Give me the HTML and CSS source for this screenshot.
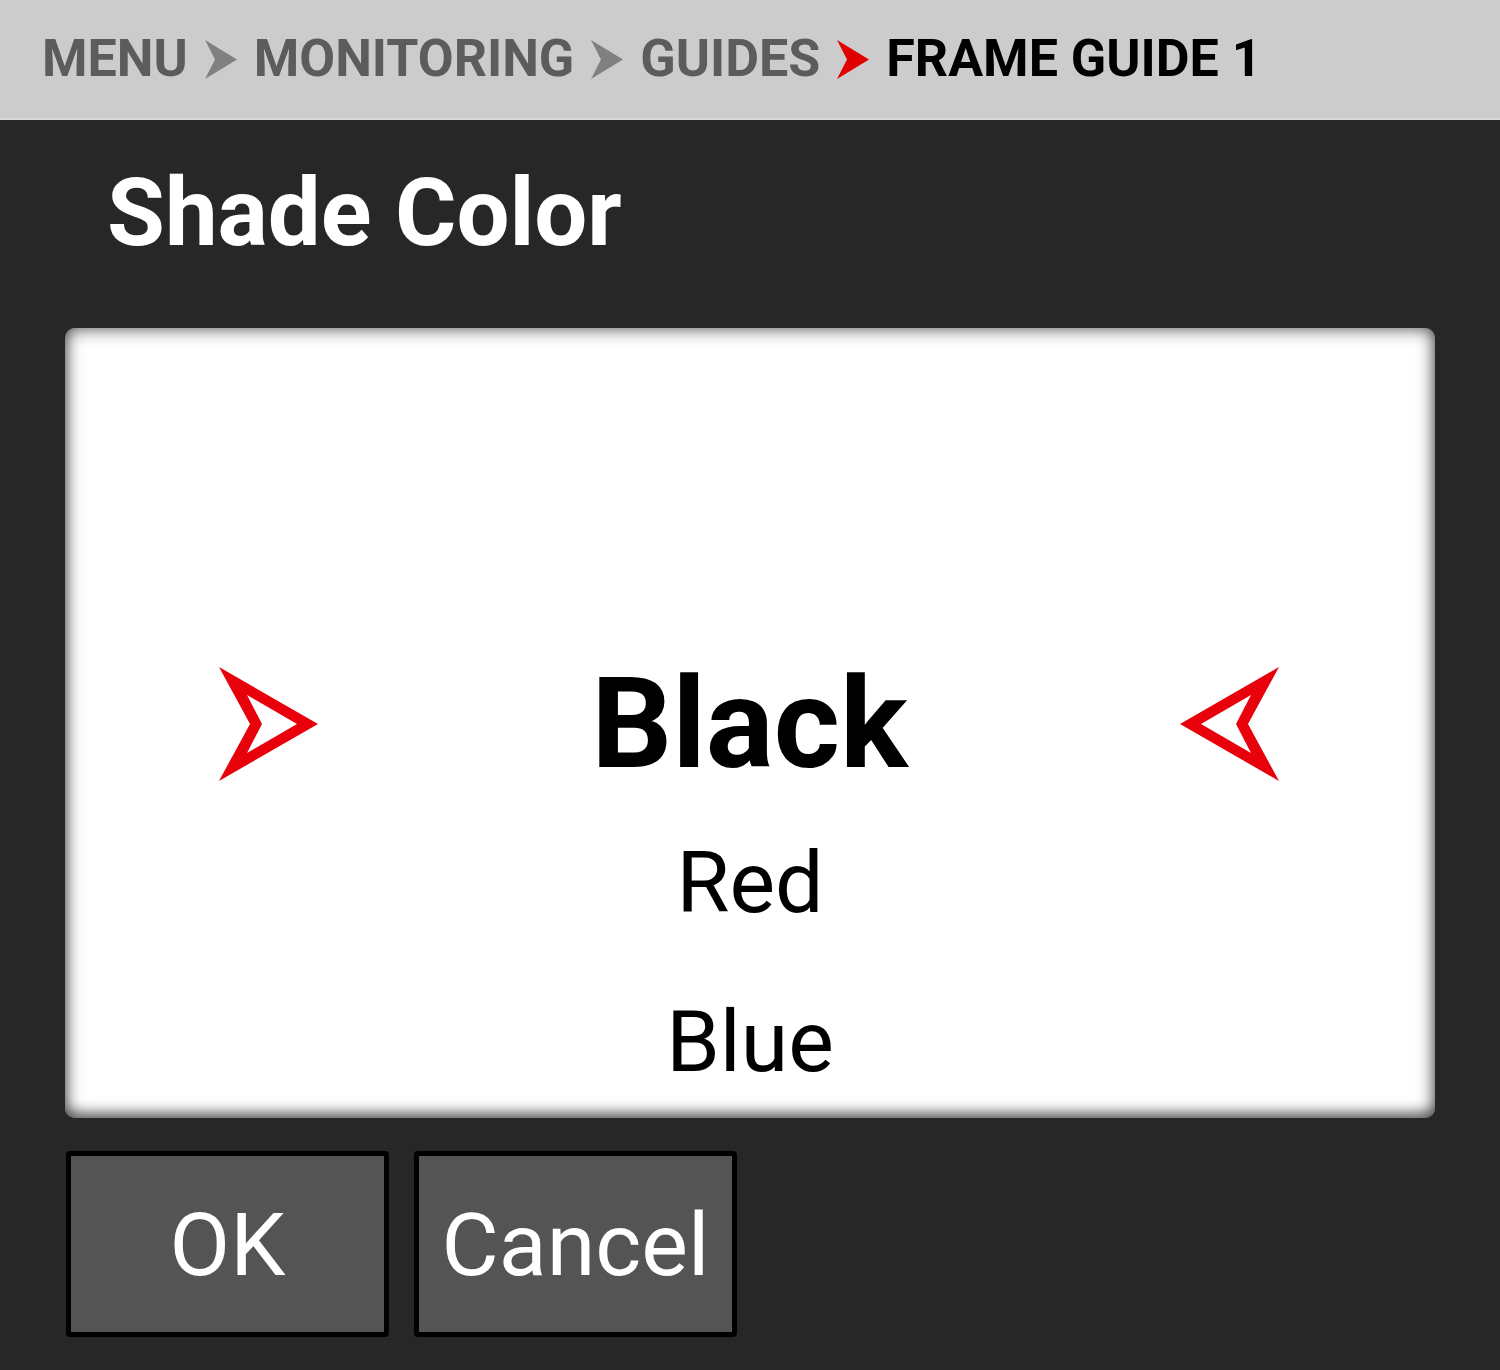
FILE: index.html
```html
<!DOCTYPE html>
<html>
<head>
<title>Shade Color</title>
<meta charset="utf-8">
<link rel="stylesheet" href="styles.css">
</head>
<body>
	<div id="breadcrumb">
		<span class="crumb">MENU</span>
		<svg class="sep" width="32" height="39" viewBox="0 0 32 39"><path d="M0 0 L32 19.5 L0 39 L10 19.5 Z"/></svg>
		<span class="crumb">MONITORING</span>
		<svg class="sep" width="32" height="39" viewBox="0 0 32 39"><path d="M0 0 L32 19.5 L0 39 L10 19.5 Z"/></svg>
		<span class="crumb">GUIDES</span>
		<svg class="sep last" width="32" height="39" viewBox="0 0 32 39"><path d="M0 0 L32 19.5 L0 39 L10 19.5 Z"/></svg>
		<span class="crumb current">FRAME GUIDE 1</span>
	</div>

	<div id="contenido">
		<h1>Shade Color</h1>

		<div id="picker">
			<div class="row selected">
				<svg class="arrow" width="100" height="115" viewBox="0 0 100 115"><path fill-rule="evenodd" d="M0 0 L99 57 L0 114 L31 57 Z M28 28 L43 57 L28 86 L78 57 Z"/></svg>
				<span>Black</span>
				<svg class="arrow" width="100" height="115" viewBox="0 0 100 115"><path fill-rule="evenodd" d="M99 0 L0 57 L99 114 L68 57 Z M71 28 L56 57 L71 86 L21 57 Z"/></svg>
			</div>
			<div class="row">Red</div>
			<div class="row">Blue</div>
		</div>

		<div id="botones">
			<button class="btn">OK</button>
			<button class="btn">Cancel</button>
		</div>
	</div>
</body>
</html>
```

FILE: styles.css
```css
body {
	margin: 0;
	background-color: #272727;
	font-family: Roboto, "Liberation Sans", sans-serif;
}
#breadcrumb {
	height: 118px;
	background-color: #cccccc;
	border-bottom: 2px solid #d9d9d9;
	display: flex;
	align-items: center;
	gap: 17px;
	padding-left: 42px;
}
.crumb {
	font-size: 52px;
	font-weight: bold;
	line-height: 1;
	color: #5c5c5c;
}
.crumb.current {
	color: #000000;
}
.sep {
	fill: #808080;
}
.sep.last {
	fill: #e00000;
}
#contenido {
	padding: 46px 65px 0 65px;
}
h1 {
	margin: 0 0 68px 42px;
	font-size: 94px;
	line-height: 1;
	font-weight: bold;
	color: #ffffff;
}
#picker {
	height: 790px;
	overflow: hidden;
	background-color: #ffffff;
	border-radius: 10px;
	box-shadow: inset 0 0 18px rgba(0, 0, 0, 0.7), inset 0 -6px 12px rgba(0, 0, 0, 0.3);
	display: flex;
	flex-direction: column;
	box-sizing: border-box;
	padding-top: 316px;
}
.row {
	flex: none;
	height: 159px;
	line-height: 159px;
	text-align: center;
	font-size: 86px;
	color: #000000;
}
.row.selected {
	display: flex;
	align-items: center;
	justify-content: space-between;
	padding: 0 155px 0 154px;
	font-size: 127px;
	font-weight: bold;
}
.arrow {
	fill: #e8000b;
	margin-top: 2px;
}
#botones {
	display: flex;
	gap: 25px;
	margin: 33px 0 0 1px;
}
.btn {
	width: 323px;
	height: 186px;
	box-sizing: border-box;
	border: 5px solid #000000;
	border-radius: 4px;
	background-color: #545454;
	color: #ffffff;
	font-family: Roboto, "Liberation Sans", sans-serif;
	font-size: 88px;
	padding: 0;
}
```
